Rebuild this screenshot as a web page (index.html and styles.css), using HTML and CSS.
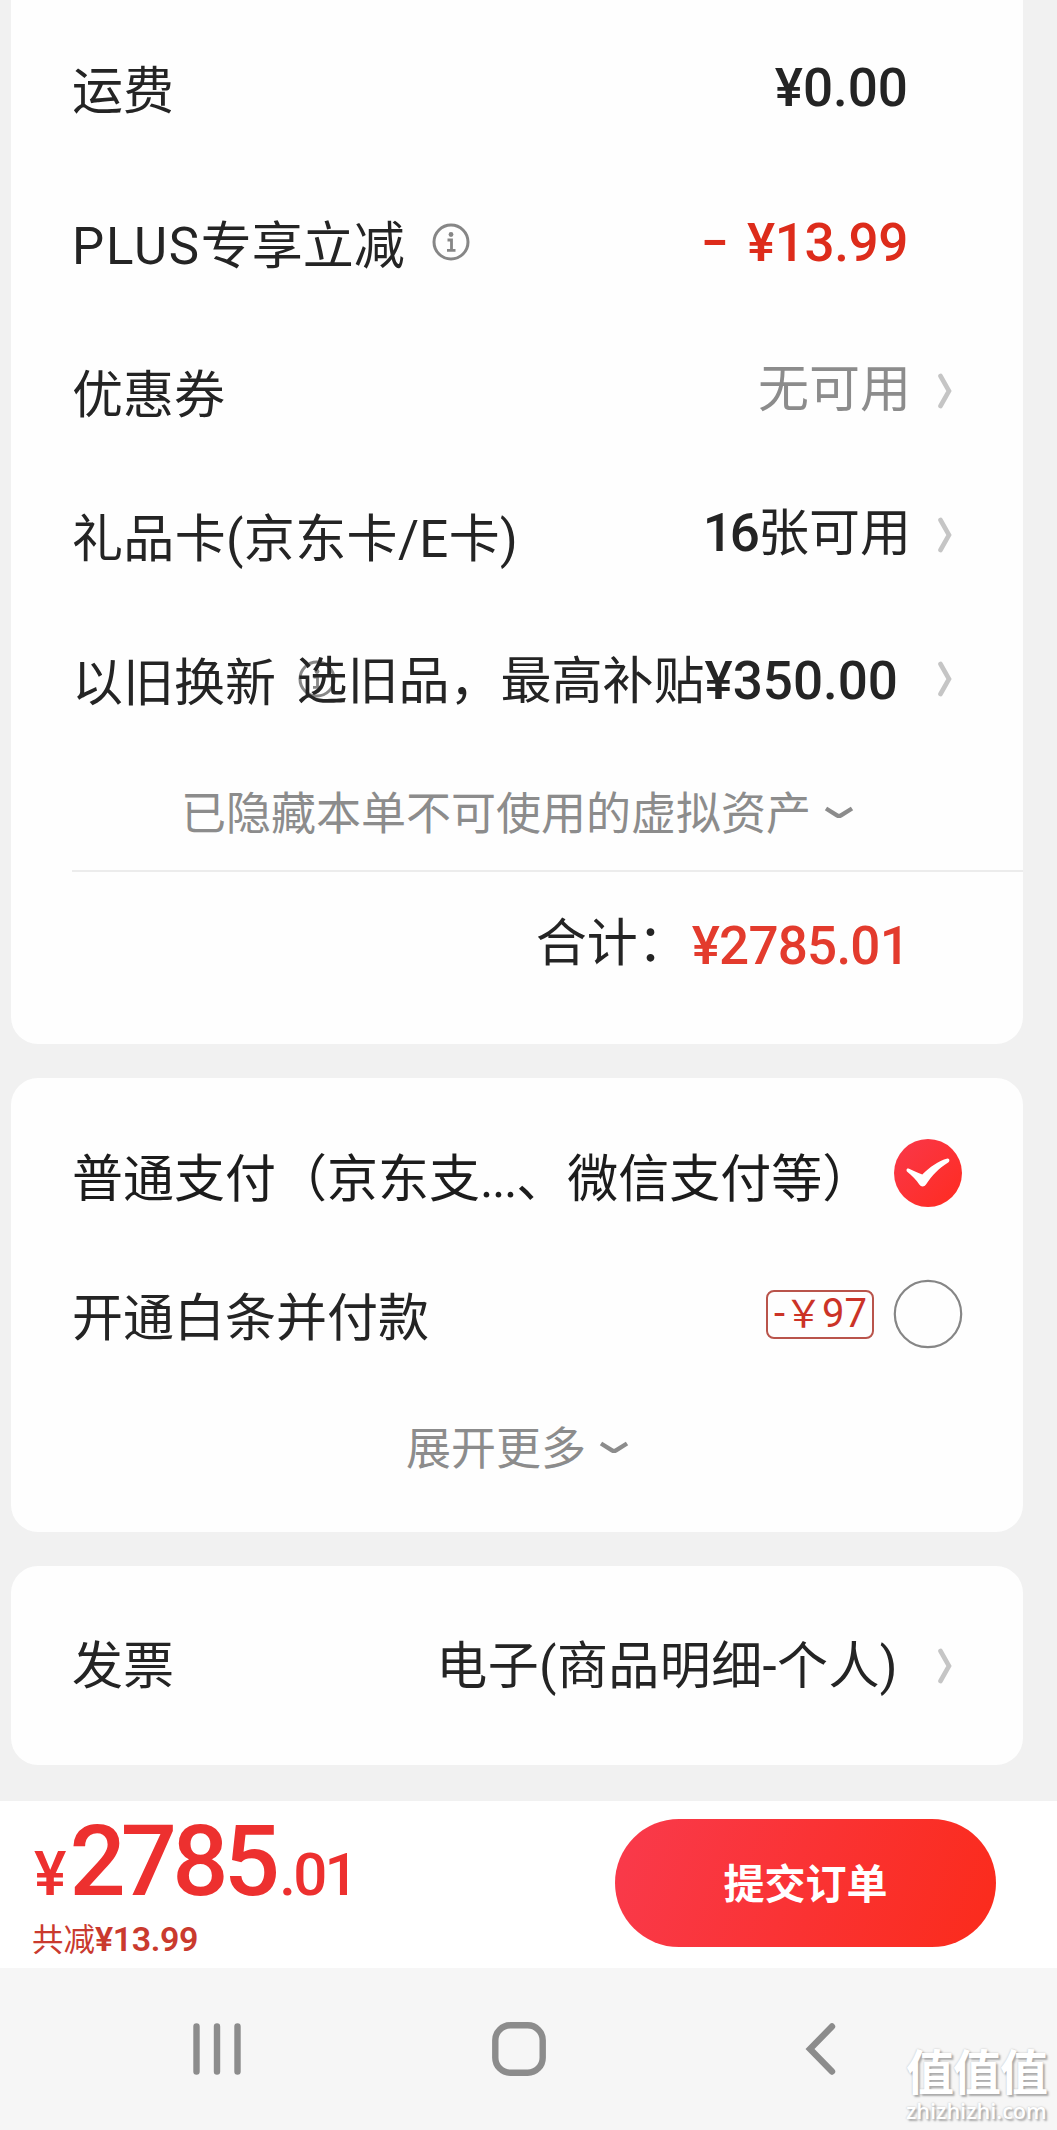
FILE: index.html
```html
<!DOCTYPE html>
<html lang="zh-CN">
<head>
<meta charset="utf-8">
<title>确认订单</title>
<link rel="stylesheet" href="styles.css">
</head>
<body>
<svg class="defs" aria-hidden="true">
  <symbol id="info" viewBox="0 0 38 38"><circle cx="19" cy="19" r="17" fill="none" stroke="currentColor" stroke-width="3"/><circle cx="19" cy="11.5" r="2.4" fill="currentColor"/><path d="M15.5 17H19.5V27M15 27.3H23.5" fill="none" stroke="currentColor" stroke-width="2.8"/></symbol>
  <symbol id="right" viewBox="0 0 16 36"><path d="M3.500 3L12 18L3.500 33" fill="none" stroke="currentColor" stroke-width="4.600" stroke-linecap="round"/></symbol>
  <symbol id="down" viewBox="0 0 30 14"><path d="M2 2.5L13 9.3Q15 10.500 17 9.3L28 2.5" fill="none" stroke="currentColor" stroke-width="4.400"/></symbol>
</svg>
<main class="page">
  <section class="card card-amount">
    <div class="row row-freight"><span class="label">运费</span><span class="value num">¥0.00</span></div>
    <div class="row row-plus"><span class="label"><span class="latin">PLUS</span>专享立减</span><svg class="info"><use href="#info"/></svg><span class="value num red"><span class="minus">-</span>¥13.99</span></div>
    <div class="row row-coupon"><span class="label">优惠券</span><span class="value gray">无可用</span><svg class="right"><use href="#right"/></svg></div>
    <div class="row row-gift"><span class="label">礼品卡(京东卡/E卡)</span><span class="value"><b class="num">16</b>张可用</span><svg class="right"><use href="#right"/></svg></div>
    <div class="row row-trade"><span class="label">以旧换新</span><svg class="info info-under"><use href="#info"/></svg><span class="value">选旧品，最高补贴<b class="num">¥350.00</b></span><svg class="right"><use href="#right"/></svg></div>
    <div class="more more-assets"><span>已隐藏本单不可使用的虚拟资产</span><svg class="down"><use href="#down"/></svg></div>
    <div class="total"><span class="total-label">合计：</span><b class="num total-num">¥2785.01</b></div>
  </section>

  <section class="card card-pay">
    <div class="pay pay-normal"><span class="label">普通支付（京东支<span class="dots">...</span>、微信支付等）</span>
      <svg class="radio" viewBox="0 0 70 70"><defs><linearGradient id="rg" x1="0" x2="1" y1="0" y2="1"><stop offset="0" stop-color="#f9384a"/><stop offset="1" stop-color="#ff2b20"/></linearGradient></defs><circle cx="35" cy="35" r="34" fill="url(#rg)"/><path d="M15.500 30.500C20 32.500 24 34.500 29.300 36.500C37 29 45 23 54.500 20.500C56.800 20.300 57 23.500 55.200 24.500C46 30 39 37.500 33 46.500C31.300 49 28 49 26.300 46.500C23 41.500 19.500 38 14.500 34C12.800 32.500 13.500 30 15.500 30.500Z" fill="#fff"/></svg>
    </div>
    <div class="pay pay-credit"><span class="label">开通白条并付款</span><span class="badge"><span>-</span><span class="yen">￥</span><span>97</span></span>
      <svg class="radio" viewBox="0 0 70 70"><circle cx="35" cy="35" r="33.200" fill="none" stroke="#868686" stroke-width="2.200"/></svg>
    </div>
    <div class="more more-pay"><span>展开更多</span><svg class="down"><use href="#down"/></svg></div>
  </section>

  <section class="card card-invoice">
    <div class="row row-invoice"><span class="label">发票</span><span class="value">电子(商品明细-个人)</span><svg class="right"><use href="#right"/></svg></div>
  </section>
</main>

<footer class="submit">
  <div class="sum">
    <div class="price num"><span class="small yuan">¥</span><span class="big">2785</span><span class="small cents">.01</span></div>
    <div class="saved">共减<b class="num">¥13.99</b></div>
  </div>
  <button class="btn" type="button">提交订单</button>
</footer>

<nav class="nav">
  <svg class="nav-icon" viewBox="0 0 60 60"><path d="M9.500 7.500V52.500M30 7.500V52.500M50.500 7.500V52.500" fill="none" stroke="#8c8c8c" stroke-width="6.400" stroke-linecap="round"/></svg>
  <svg class="nav-icon" viewBox="0 0 60 60"><rect x="6.300" y="6.300" width="47.400" height="47.400" rx="15" fill="none" stroke="#8c8c8c" stroke-width="6.400"/></svg>
  <svg class="nav-icon" viewBox="0 0 60 60"><path d="M41 7.500L19 30L41 52.500" fill="none" stroke="#8c8c8c" stroke-width="6.400" stroke-linecap="round" stroke-linejoin="miter"/></svg>
  <div class="mark"><span class="mark-cn">值值值</span><span class="mark-url">zhizhizhi.com</span></div>
</nav>
</body>
</html>
```
FILE: styles.css
```css
* { box-sizing: border-box; }
body {
  margin: 0;
  width: 1057px;
  height: 2130px;
  overflow: hidden;
  background: #f1f1f1;
  color: #242424;
  font-family: Roboto, "Noto Sans CJK SC", sans-serif;
  font-size: 51px;
  line-height: 60px;
  white-space: nowrap;
  display: flex;
  flex-direction: column;
}
svg { display: block; flex: none; overflow: visible; }
.defs { position: absolute; width: 0; height: 0; }
.page { height: 1801px; padding-left: 11px; flex: none; }
.card { width: 1012px; background: #fefefe; border-radius: 27px; overflow: hidden; }
.card-amount { height: 1044px; border-radius: 0 0 27px 27px; }
.card-pay { height: 454px; margin-top: 34px; }
.card-invoice { height: 199px; margin-top: 34px; }

.row { display: flex; align-items: center; padding: 0 70px 0 61px; }
.row-freight { height: 174px; }
.row-plus { height: 136px; }
.row-coupon { height: 161px; }
.row-gift { height: 128px; }
.row-trade { height: 159px; }
.row-invoice { height: 199px; }
.row-freight, .row-plus { padding-right: 115px; }
.label { padding-top: 10px; }
.latin { letter-spacing: 1.8px; }
.value { margin-left: auto; }
.num { font-family: Roboto, sans-serif; font-size: 53px; font-weight: 500; }
.row-freight .value, .row-plus .value { padding-top: 2px; }
.red { color: #dd2c1b; letter-spacing: -0.4px; }
.minus { display: inline-block; margin-right: 22px; transform: translate(-1px, -2px) scaleX(1.5); }
.gray { color: #8c8c8c; }
.row-coupon .value { padding-bottom: 1px; margin-right: -1px; }
.row-gift .label { letter-spacing: 0.35px; }
.row-gift .value { padding-bottom: 4px; margin-right: -1px; }
.row-gift .num { letter-spacing: -3px; margin-right: 1px; }
.row-trade .value { padding-top: 5px; margin-right: 13px; }
.row-trade .right { margin-left: 26px; }
.row-invoice .label, .row-invoice .value { padding-top: 3px; }
.row-invoice .value { margin-right: 12px; letter-spacing: 0.4px; }
.info { width: 38px; height: 38px; margin-left: 27px; color: #868686; }
.info-under { margin: 0 -48px 0 22px; }
.right { width: 16px; height: 36px; margin-left: 27px; color: #c5c5c5; }
.more { display: flex; align-items: center; color: #8c8c8c; font-size: 45px; gap: 13px; }
.more span { padding-top: 4px; }
.down { width: 30px; height: 14px; }
.more-assets { height: 106px; padding: 4px 0 0 170px; }
.more-pay { height: 176px; padding: 7px 0 0 395px; }
.total {
  height: 136px;
  margin: 6px 0 0 61px;
  padding-right: 114px;
  border-top: 2px solid #ececec;
  display: flex;
  align-items: center;
  justify-content: flex-end;
  gap: 3px;
}
.total-label { padding-top: 9px; }
.total-num { color: #e33b2d; padding-top: 13px; letter-spacing: -0.8px; }

.pay { display: flex; align-items: center; padding: 0 60px 0 61px; }
.pay-normal { height: 194px; color: #1c1c1c; }
.pay-normal .radio { margin-bottom: 4px; }
.dots { letter-spacing: -1.4px; }
.pay-credit { height: 84px; }
.radio { width: 70px; height: 70px; margin-left: auto; }
.badge {
  width: 108px;
  height: 49px;
  margin-left: auto;
  margin-right: 19px;
  padding: 0 5px 0 6px;
  display: flex;
  align-items: center;
  justify-content: space-between;
  border: 2px solid #b9544b;
  border-radius: 8px;
  color: #cb3327;
  font-size: 40px;
  line-height: 46px;
}
.badge + .radio { margin-left: 0; }
.yen { font-size: 38px; margin: 0 -5px; }

.submit {
  height: 167px;
  flex: none;
  background: #fff;
  padding: 18px 61px 0 32px;
  display: flex;
  justify-content: space-between;
}
.price { display: flex; align-items: baseline; height: 94px; line-height: 84px; color: #ed302f; }
.small { font-size: 61px; font-weight: 500; }
.yuan { margin-left: 2px; }
.big { font-size: 99px; letter-spacing: -4.8px; margin-left: 3px; }
.cents { font-size: 60px; margin-left: 4px; letter-spacing: -2.8px; }
.saved { color: #ca3a2e; font-size: 31.5px; line-height: 40px; padding-top: 6px; }
.saved .num { font-size: 34px; font-weight: 600; letter-spacing: -0.4px; }
.btn {
  width: 381px;
  height: 128px;
  padding: 0 0 4px;
  border: 0;
  border-radius: 64px;
  background: linear-gradient(110deg, #f93a4c, #fb2b1b);
  color: #fff;
  font: 700 41px/60px "Noto Sans CJK SC", sans-serif;
}
.nav { position: relative; flex: none; height: 162px; background: #f6f6f6; display: flex; align-items: flex-start; padding: 51px 0 0 187px; gap: 242px; }
.nav-icon { width: 60px; height: 60px; }
.mark {
  position: absolute;
  left: 906px;
  top: 71px;
  color: #fff;
  text-shadow: 2px 2px 2px #aaa, 0 0 2px #bbb;
}
.mark-cn { display: block; font: 700 48px/60px "Noto Sans CJK SC", sans-serif; letter-spacing: -1px; }
.mark-url { display: block; font: 600 21.6px/24px "Open Sans", sans-serif; margin-top: 0; }
```
